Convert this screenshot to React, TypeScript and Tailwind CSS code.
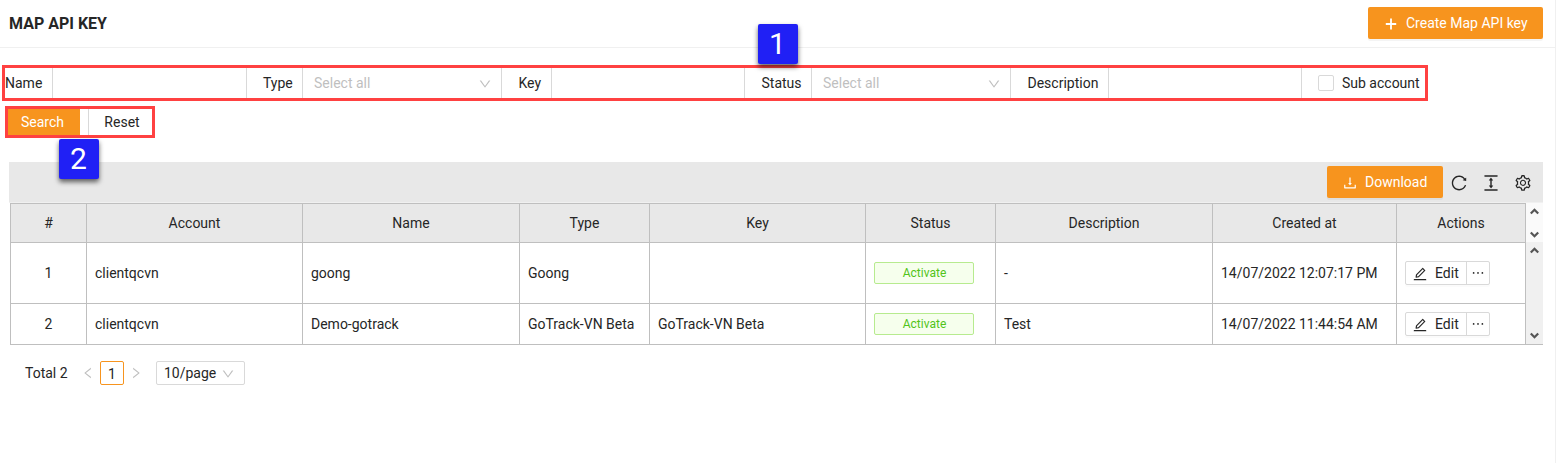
import React from "react";
import {
  AiOutlineColumnHeight,
  AiOutlineDown,
  AiOutlineDownload,
  AiOutlineEdit,
  AiOutlineEllipsis,
  AiOutlineLeft,
  AiOutlineReload,
  AiOutlineRight,
  AiOutlineSetting,
} from "react-icons/ai";

const columns = ["#", "Account", "Name", "Type", "Key", "Status", "Description", "Created at", "Actions"];

const rows = [
  {
    id: 1,
    account: "clientqcvn",
    name: "goong",
    type: "Goong",
    key: "",
    description: "-",
    createdAt: "14/07/2022 12:07:17 PM",
    height: "h-[61px]",
  },
  {
    id: 2,
    account: "clientqcvn",
    name: "Demo-gotrack",
    type: "GoTrack-VN Beta",
    key: "GoTrack-VN Beta",
    description: "Test",
    createdAt: "14/07/2022 11:44:54 AM",
    height: "h-[41px]",
  },
];

const grid = "grid grid-cols-[76px_216px_217px_130px_216px_130px_217px_184px_129px]";

function Label({ text, className }: { text: string; className: string }) {
  return (
    <div className={`flex h-full shrink-0 items-center border-r border-[#d9d9d9] ${className}`}>{text}</div>
  );
}

function TextField({ label, className }: { label: string; className: string }) {
  return <input aria-label={label} className={`h-full shrink-0 border-r border-[#d9d9d9] outline-none ${className}`} />;
}

function SelectField({ className }: { className: string }) {
  return (
    <div
      className={`flex h-full shrink-0 items-center justify-between border-r border-[#d9d9d9] pr-[9px] pl-[11px] text-[#bfbfbf] ${className}`}
    >
      <span>Select all</span>
      <AiOutlineDown size={14} className="mt-[2px]" />
    </div>
  );
}

function Marker({ value, className }: { value: string; className: string }) {
  return (
    <div
      className={`absolute z-10 flex size-10 items-center justify-center rounded-[2px] bg-[#2020f5] text-[30px] leading-none text-white shadow-[0_3px_5px_rgba(0,0,0,0.6)] ${className}`}
    >
      {value}
    </div>
  );
}

function Arrow({ down = false }: { down?: boolean }) {
  return (
    <svg width="9" height="7" viewBox="0 0 9 7" className={down ? "rotate-180" : ""}>
      <path d="M0.8 5.6 L4.5 1.8 L8.2 5.6" fill="none" stroke="#555" strokeWidth="2.2" />
    </svg>
  );
}

function Cell({ children, className = "" }: { children?: React.ReactNode; className?: string }) {
  return (
    <div className={`flex items-center border-r border-b border-[#bfbfbf] px-2 whitespace-nowrap ${className}`}>
      {children}
    </div>
  );
}

export default function App() {
  return (
    <div className="h-[463px] w-[1556px] overflow-hidden border-r border-[#f0f0f0] bg-white font-[Roboto,sans-serif] text-sm text-[#262626]">
      <header className="flex h-12 items-center justify-between border-b border-[#f0f0f0] pr-3 pb-[1px] pl-[9px]">
        <h1 className="pt-[1px] text-base font-bold">MAP API KEY</h1>
        <button className="flex h-8 w-[175px] items-center rounded-[2px] bg-[#f7941e] pl-[17px] text-white shadow-[0_2px_0_rgba(0,0,0,0.045)]">
          <svg width="12" height="12" viewBox="0 0 12 12" className="mt-[2px]">
            <path d="M6 0.5 V11.5 M0.8 6 H11.2" stroke="currentColor" strokeWidth="1.8" />
          </svg>
          <span className="ml-[9px]">Create Map API key</span>
        </button>
      </header>

      <div className="relative mt-[17px] ml-[2px] flex h-9 w-[1426px] items-center border-3 border-[#ff4141]">
        <Label text="Name" className="w-[48px]" />
        <TextField label="Name" className="w-[194px]" />
        <Label text="Type" className="w-[56px] pl-4" />
        <SelectField className="w-[199px]" />
        <Label text="Key" className="w-[50px] pl-[16.5px]" />
        <TextField label="Key" className="w-[193px]" />
        <Label text="Status" className="w-[67px] pl-[16.5px]" />
        <SelectField className="w-[199px]" />
        <Label text="Description" className="w-[98px] pl-[16.5px]" />
        <TextField label="Description" className="w-[193px]" />
        <label className="flex items-center gap-2 pl-4 whitespace-nowrap">
          <span className="size-4 rounded-[2px] border border-[#d9d9d9] bg-white" />
          Sub account
        </label>
        <Marker value="1" className="top-[-44px] left-[753px] pr-[1px]" />
      </div>

      <div className="relative mt-[5px] ml-[5px] flex h-8 w-[150px] border-3 border-[#ff4141]">
        <button className="w-[72px] bg-[#f7941e] pr-[3px] text-white">Search</button>
        <button className="ml-2 flex-1 border-l border-[#d9d9d9] pl-[3px]">Reset</button>
        <Marker value="2" className="top-[30px] left-[51px] pr-[1px]" />
      </div>

      <section className="mt-6 ml-[9px] w-[1534px]">
        <div className="flex h-10 items-center justify-end bg-[#e8e8e8] pr-[11px]">
          <button className="mr-[7px] flex h-8 w-[116px] items-center rounded-[2px] bg-[#f7941e] pl-[15px] text-white shadow-[0_2px_0_rgba(0,0,0,0.045)]">
            <AiOutlineDownload size={16} className="mt-[1px]" />
            <span className="ml-[7px]">Download</span>
          </button>
          <div className="flex items-center gap-[13px] pt-[2px]">
            <AiOutlineReload size={18} />
            <AiOutlineColumnHeight size={20} />
            <AiOutlineSetting size={18} />
          </div>
        </div>

        <div className="flex border-t border-[#f0f0f0] pl-[1px]">
          <div className="w-[1516px] border-t border-l border-[#bfbfbf]">
            <div className={`${grid} h-[39px] bg-[#e8e8e8]`}>
              {columns.map((title) => (
                <Cell key={title} className="justify-center">
                  {title}
                </Cell>
              ))}
            </div>
            {rows.map((row) => (
              <div key={row.id} className={`${grid} ${row.height}`}>
                <Cell className="justify-center">{row.id}</Cell>
                <Cell>{row.account}</Cell>
                <Cell>{row.name}</Cell>
                <Cell>{row.type}</Cell>
                <Cell>{row.key}</Cell>
                <Cell>
                  <span className="flex h-[22px] w-[100px] items-center justify-center rounded-[2px] border border-[#b7eb8f] bg-[#f6ffed] pl-[1px] text-xs text-[#52c41a]">
                    Activate
                  </span>
                </Cell>
                <Cell>{row.description}</Cell>
                <Cell>{row.createdAt}</Cell>
                <Cell>
                  <div className="flex h-6 w-[85px] rounded-[2px] border border-[#d9d9d9] shadow-[0_2px_0_rgba(0,0,0,0.015)]">
                    <button className="flex w-[61px] items-center border-r border-[#d9d9d9] pl-[6px]">
                      <AiOutlineEdit size={16} className="mt-[2px]" />
                      <span className="ml-[7px]">Edit</span>
                    </button>
                    <button aria-label="More" className="flex flex-1 items-center justify-center">
                      <AiOutlineEllipsis size={16} />
                    </button>
                  </div>
                </Cell>
              </div>
            ))}
          </div>
          <div className="flex w-[17px] flex-col">
            <div className="flex h-[39px] flex-col items-center justify-between bg-[#fafafa] pt-[5px] pb-1">
              <Arrow />
              <Arrow down />
            </div>
            <div className="flex flex-1 flex-col items-center justify-between border-b border-[#bfbfbf] bg-[#f0f0f0] py-[5px]">
              <Arrow />
              <Arrow down />
            </div>
          </div>
        </div>
      </section>

      <footer className="mt-4 ml-[25px] flex h-6 items-center">
        <span className="w-[56px]">Total 2</span>
        <AiOutlineLeft size={14} className="text-[#bfbfbf]" />
        <span className="ml-[5px] flex size-6 items-center justify-center rounded-[2px] border border-[#f7941e] pt-[1px]">
          1
        </span>
        <AiOutlineRight size={14} className="ml-[5px] text-[#bfbfbf]" />
        <div className="ml-[13px] flex h-6 w-[89px] items-center justify-between rounded-[2px] border border-[#d9d9d9] pr-[9px] pl-[7px]">
          10/page
          <AiOutlineDown size={14} className="mt-[2px] text-[#bfbfbf]" />
        </div>
      </footer>
    </div>
  );
}
